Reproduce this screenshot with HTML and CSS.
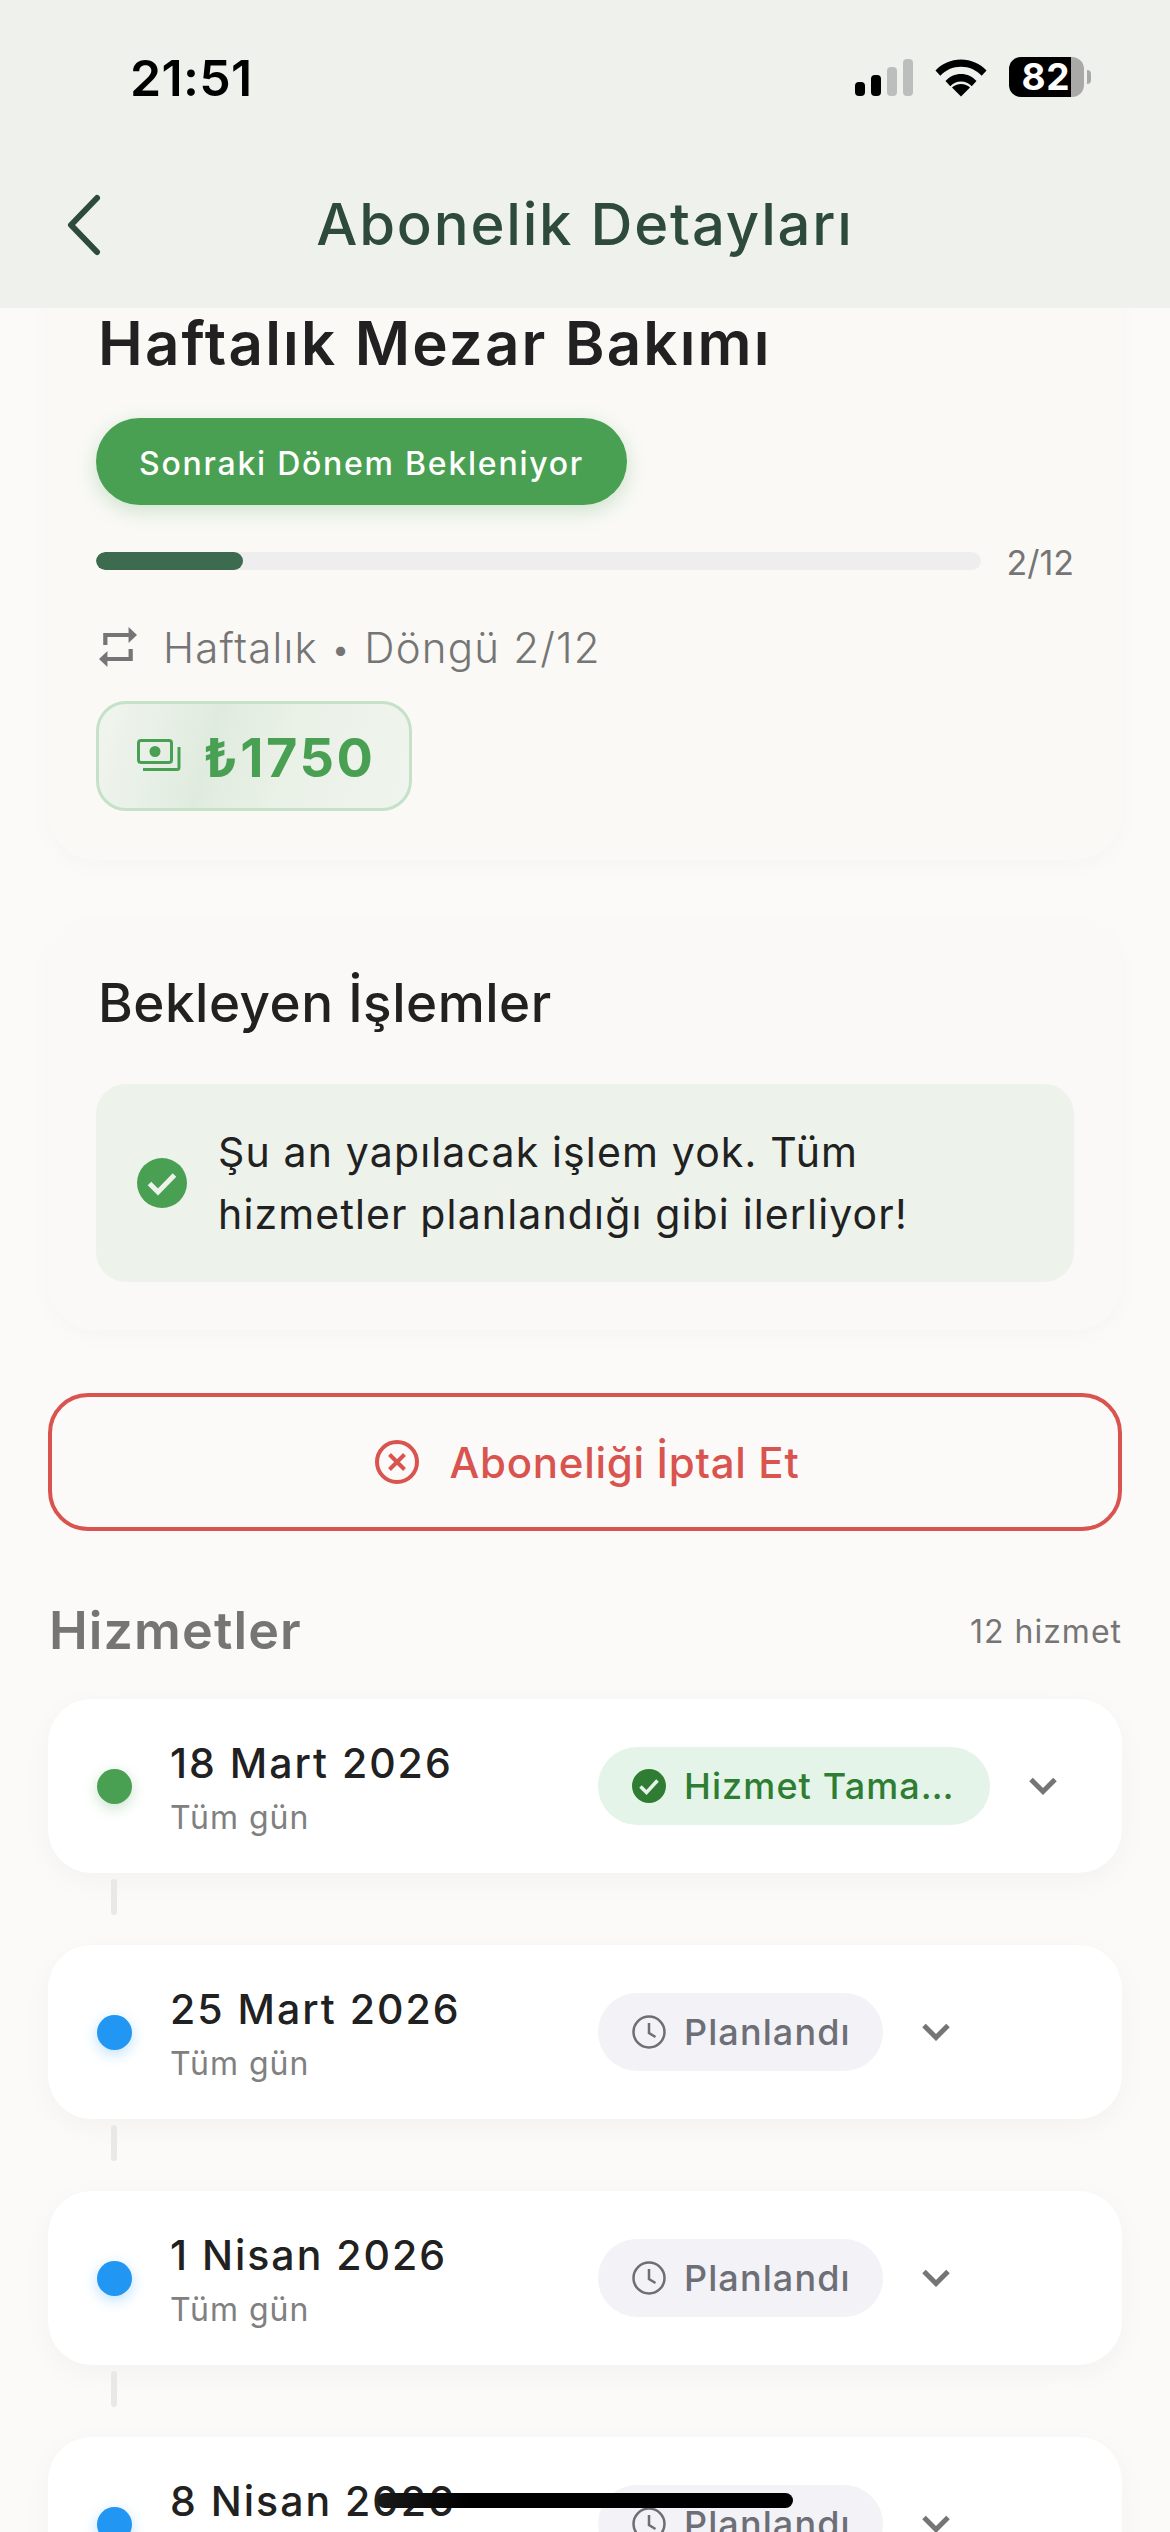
FILE: index.html
```html
<!DOCTYPE html>
<html lang="tr">
<head>
<meta charset="utf-8">
<title>Abonelik Detayları</title>
<link rel="stylesheet" href="styles.css">
</head>
<body>
<div class="screen">
  <header class="top">
    <div class="status">
      <span class="time">21:51</span>
      <div class="status-icons">
        <svg class="signal" width="58" height="37" viewBox="0 0 58 37"><rect x="0" y="23" width="10" height="14" rx="4"/><rect x="16" y="16" width="10" height="21" rx="4"/><rect class="off" x="32" y="8" width="10" height="29" rx="4"/><rect class="off" x="48" y="0" width="10" height="37" rx="4"/></svg>
        <svg class="wifi" width="52" height="38" viewBox="0 0 52 38"><path d="M0.5 11.5C7 4.5 16 0.5 26 0.5s19 4 25.5 11l-4.8 5.2C41.5 11 34 7.7 26 7.7S10.5 11 5.3 16.7z"/><path d="M10.5 22C14.5 17.6 20 15 26 15s11.5 2.6 15.5 7l-4.8 5.2C34 24.2 30.2 22.4 26 22.4s-8 1.8-10.7 4.8z"/><path d="M26 37.5 17 28.5C19.3 26.2 22.5 24.9 26 24.9s6.7 1.3 9 3.6z"/></svg>
        <div class="battery"><span class="battery-fill"><span class="battery-num">82</span></span><span class="battery-rest"></span></div>
        <span class="battery-nub"></span>
      </div>
    </div>
    <div class="nav">
      <svg class="back" width="36" height="62" viewBox="0 0 36 62"><path d="M31 4 5 31l26 27"/></svg>
      <h1 class="nav-title">Abonelik Detayları</h1>
    </div>
  </header>

  <main class="content">
    <section class="card card-plan">
      <h2 class="plan-title">Haftalık Mezar Bakımı</h2>
      <span class="state-pill">Sonraki Dönem Bekleniyor</span>
      <div class="progress-row">
        <div class="progress-track"><div class="progress-fill"></div></div>
        <span class="progress-label">2/12</span>
      </div>
      <div class="meta-row">
        <svg class="repeat" width="38" height="40" viewBox="3 2 18 20" preserveAspectRatio="none"><path d="M7 7h10v3l4-4-4-4v3H5v6h2V7zm10 10H7v-3l-4 4 4 4v-3h12v-6h-2v4z"/></svg>
        <span>Haftalık <span class="bullet">•</span> Döngü 2/12</span>
      </div>
      <div class="price">
        <svg class="money" width="44" height="34" viewBox="0 0 44 34"><rect x="1.5" y="1.5" width="33" height="22" rx="2.5"/><circle class="money-dot" cx="18" cy="12.5" r="5.5"/><path d="M42 8v20.5a2 2 0 0 1-2 2H6"/></svg>
        <span class="price-value">₺1750</span>
      </div>
    </section>

    <section class="card card-pending">
      <h2 class="pending-title">Bekleyen İşlemler</h2>
      <div class="notice">
        <svg class="check-icon" width="50" height="50" viewBox="0 0 50 50"><circle cx="25" cy="25" r="25" fill="#4aa052"/><path d="M12.5 25.5 21 34l16.5-17" fill="none" stroke="#edf2eb" stroke-width="5"/></svg>
        <p>Şu an yapılacak işlem yok. Tüm hizmetler planlandığı gibi ilerliyor!</p>
      </div>
    </section>

    <button class="cancel">
      <svg width="44" height="44" viewBox="0 0 44 44"><circle cx="22" cy="22" r="20"/><path d="m14.5 14.5 15 15m0-15-15 15"/></svg>
      <span>Aboneliği İptal Et</span>
    </button>

    <div class="section-head">
      <h2>Hizmetler</h2>
      <span>12 hizmet</span>
    </div>

    <ul class="services">
      <li class="service done">
        <i class="dot"></i>
        <div class="info"><strong>18 Mart 2026</strong><small>Tüm gün</small></div>
        <div class="badge">
          <svg width="34" height="34" viewBox="0 0 34 34"><circle cx="17" cy="17" r="17" fill="#2e7d32"/><path d="M8.5 17.5 14.5 23.5 25.5 11.5" fill="none" stroke="#e5f4e9" stroke-width="3.5"/></svg>
          <span class="badge-text">Hizmet Tamamlandı</span>
        </div>
        <svg class="chev" width="28" height="18" viewBox="0 0 28 18"><path d="m2 2.500 12 12 12-12"/></svg>
      </li>
      <li class="link"></li>
      <li class="service planned">
        <i class="dot"></i>
        <div class="info"><strong>25 Mart 2026</strong><small>Tüm gün</small></div>
        <div class="badge">
          <svg width="34" height="34" viewBox="0 0 34 34"><circle cx="17" cy="17" r="15.5" fill="none" stroke="#6e6e76" stroke-width="2.5"/><path d="M17 8v10l6.5 4" fill="none" stroke="#6e6e76" stroke-width="2.5"/></svg>
          <span class="badge-text">Planlandı</span>
        </div>
        <svg class="chev" width="28" height="18" viewBox="0 0 28 18"><path d="m2 2.500 12 12 12-12"/></svg>
      </li>
      <li class="link"></li>
      <li class="service planned">
        <i class="dot"></i>
        <div class="info"><strong>1 Nisan 2026</strong><small>Tüm gün</small></div>
        <div class="badge">
          <svg width="34" height="34" viewBox="0 0 34 34"><circle cx="17" cy="17" r="15.5" fill="none" stroke="#6e6e76" stroke-width="2.5"/><path d="M17 8v10l6.5 4" fill="none" stroke="#6e6e76" stroke-width="2.5"/></svg>
          <span class="badge-text">Planlandı</span>
        </div>
        <svg class="chev" width="28" height="18" viewBox="0 0 28 18"><path d="m2 2.500 12 12 12-12"/></svg>
      </li>
      <li class="link"></li>
      <li class="service planned">
        <i class="dot"></i>
        <div class="info"><strong>8 Nisan 2026</strong><small>Tüm gün</small></div>
        <div class="badge">
          <svg width="34" height="34" viewBox="0 0 34 34"><circle cx="17" cy="17" r="15.5" fill="none" stroke="#6e6e76" stroke-width="2.5"/><path d="M17 8v10l6.5 4" fill="none" stroke="#6e6e76" stroke-width="2.5"/></svg>
          <span class="badge-text">Planlandı</span>
        </div>
        <svg class="chev" width="28" height="18" viewBox="0 0 28 18"><path d="m2 2.500 12 12 12-12"/></svg>
      </li>
    </ul>
  </main>

  <div class="home-bar"></div>
</div>
</body>
</html>
```

FILE: styles.css
```css
* { box-sizing: border-box; }
html, body { margin: 0; padding: 0; }
body { background: #fbfaf8; font-family: Inter, "Noto Sans", sans-serif; color: #212121; }
h1, h2, p, ul { margin: 0; padding: 0; }
.screen { position: relative; width: 1170px; height: 2532px; overflow: hidden; display: flex; flex-direction: column; background: #fbfaf8; }

.top { position: relative; z-index: 2; flex: none; height: 308px; background: #eff1ec; }
.status { height: 156px; display: flex; justify-content: space-between; padding: 50px 79px 0 130px; }
.time { font-size: 50px; line-height: 56px; font-weight: 600; color: #000; letter-spacing: .3px; }
.status-icons { display: flex; align-items: flex-start; padding-top: 7px; }
.signal { fill: #000; margin-top: 2px; }
.signal .off { fill: #bdbdbd; }
.wifi { fill: #000; margin: 2px 22px 0 22px; }
.battery { width: 75px; height: 40px; display: flex; }
.battery-fill { width: 62px; border-radius: 12px 0 0 12px; background: #000; color: #fff; display: flex; justify-content: flex-end; align-items: center; }
.battery-num { font-size: 37px; line-height: 40px; font-weight: 700; letter-spacing: .5px; padding-right: 1px; }
.battery-rest { flex: 1; border-radius: 0 12px 12px 0; background: #a9aaa8; }
.battery-nub { width: 4px; height: 14px; margin: 13px 0 0 3px; border-radius: 0 7px 7px 0; background: #a9aaa8; }

.nav { position: relative; height: 152px; padding-bottom: 16px; display: flex; align-items: center; justify-content: center; }
.back { position: absolute; left: 66px; top: 38px; fill: none; stroke: #2d4a3a; stroke-width: 6; stroke-linecap: round; stroke-linejoin: round; }
.nav-title { font-size: 58px; font-weight: 500; line-height: 70px; color: #2d4a3a; letter-spacing: 1.8px; }

.content { flex: 1; min-height: 0; overflow: hidden; padding: 0 48px; }
.card { border-radius: 48px; box-shadow: 0 6px 24px rgba(0,0,0,.025); }
.card-plan { height: 592px; margin-top: -40px; padding: 39px 48px 0; background: #faf9f6; }
.plan-title { font-size: 60px; line-height: 72px; font-weight: 600; letter-spacing: 2.2px; color: #212121; margin-left: 2px; }
.state-pill { display: block; width: fit-content; margin-top: 39px; height: 87px; line-height: 91px; padding: 0 43px; border-radius: 44px; background: #4aa052; color: #fff; font-size: 32px; font-weight: 500; letter-spacing: 1.75px; box-shadow: 0 6px 20px rgba(74,160,82,.25); }
.progress-row { display: flex; align-items: center; gap: 25px; margin-top: 47px; height: 18px; }
.progress-track { flex: 1; height: 18px; border-radius: 9px; background: #eeeeee; overflow: hidden; }
.progress-fill { width: 147px; height: 100%; border-radius: 9px; background: #3d6b50; }
.progress-label { font-size: 34px; color: #757575; line-height: 38px; padding-top: 3px; }
.meta-row { display: flex; align-items: center; gap: 26px; margin-top: 52px; height: 50px; padding-left: 3px; font-size: 42px; font-weight: 300; color: #757575; letter-spacing: 1.2px; }
.bullet { font-size: 34px; vertical-align: 2px; }
.repeat { flex: none; fill: #757575; }
.price { display: flex; align-items: center; gap: 22px; width: 316px; height: 110px; margin-top: 29px; padding-left: 38px; border: 3px solid #c5e1c8; border-radius: 30px; background: linear-gradient(105deg, #f1f5ef 0%, #e0ebdf 36%, #eaf1e7 60%, #f0f4ee 100%); }
.money { flex: none; fill: none; stroke: #4aa052; stroke-width: 3; }
.money .money-dot { fill: #4aa052; stroke: none; }
.price-value { font-size: 54px; line-height: 60px; padding-top: 3px; font-weight: 700; color: #4aa052; letter-spacing: 2.5px; }

.card-pending { height: 410px; margin-top: 60px; padding: 51px 48px 0; background: #fbf9f7; }
.pending-title { font-size: 53px; line-height: 64px; font-weight: 500; letter-spacing: .5px; color: #212121; margin-left: 2px; }
.notice { display: flex; align-items: center; gap: 31px; height: 198px; margin-top: 49px; padding: 0 60px 0 41px; border-radius: 30px; background: #edf2eb; }
.check-icon { flex: none; }
.notice p { font-size: 41px; line-height: 62px; font-weight: 400; color: #212121; letter-spacing: 1.15px; }

.cancel { display: flex; align-items: center; justify-content: center; gap: 31px; width: 100%; height: 138px; margin-top: 63px; background: transparent; border: 4px solid #d9534f; border-radius: 40px; color: #d9534f; font: 500 42px Inter, sans-serif; letter-spacing: .7px; padding: 0 0 0 4px; }
.cancel svg { fill: none; stroke: #d9534f; stroke-width: 4; }

.section-head { display: flex; justify-content: space-between; align-items: center; height: 60px; margin-top: 70px; }
.section-head h2 { font-size: 52px; line-height: 60px; font-weight: 600; letter-spacing: 1.1px; color: #757575; margin-left: 1px; }
.section-head span { font-size: 32px; color: #757575; letter-spacing: 1px; }

.services { list-style: none; margin-top: 38px; }
.service { display: flex; align-items: center; height: 174px; padding: 0 0 0 49px; border-radius: 44px; background: #fff; box-shadow: 0 8px 30px rgba(0,0,0,.035); }
.dot { flex: none; width: 35px; height: 35px; border-radius: 50%; margin-right: 38px; }
.done .dot { background: #4aa052; box-shadow: 0 4px 14px rgba(74,160,82,.3); }
.planned .dot { background: #2196f3; box-shadow: 0 4px 14px rgba(33,150,243,.3); }
.info { flex: none; width: 428px; padding-top: 4px; display: flex; flex-direction: column; }
.info strong { font-size: 41px; line-height: 50px; font-weight: 500; letter-spacing: 2px; color: #212121; }
.info small { font-size: 32px; line-height: 40px; margin-top: 10px; color: #808080; letter-spacing: 1px; }
.badge { display: flex; align-items: center; gap: 18px; height: 78px; padding: 0 32px 0 34px; border-radius: 39px; font-size: 36px; font-weight: 500; letter-spacing: 1.1px; }
.badge svg { flex: none; }
.badge-text { white-space: nowrap; overflow: hidden; text-overflow: ellipsis; }
.done .badge { width: 392px; background: #e5f4e9; color: #2e7d32; }
.planned .badge { background: #f2f2f7; color: #6e6e76; }
.chev { flex: none; margin-left: 39px; fill: none; stroke: #757575; stroke-width: 5; }
.link { width: 6px; height: 36px; margin: 6px 0 30px 63px; border-radius: 3px; background: #e8e8e8; }

.home-bar { position: absolute; left: 377px; top: 2493px; width: 416px; height: 15px; border-radius: 8px; background: linear-gradient(90deg, #1a1a1a 0%, #000 22%); }
```
